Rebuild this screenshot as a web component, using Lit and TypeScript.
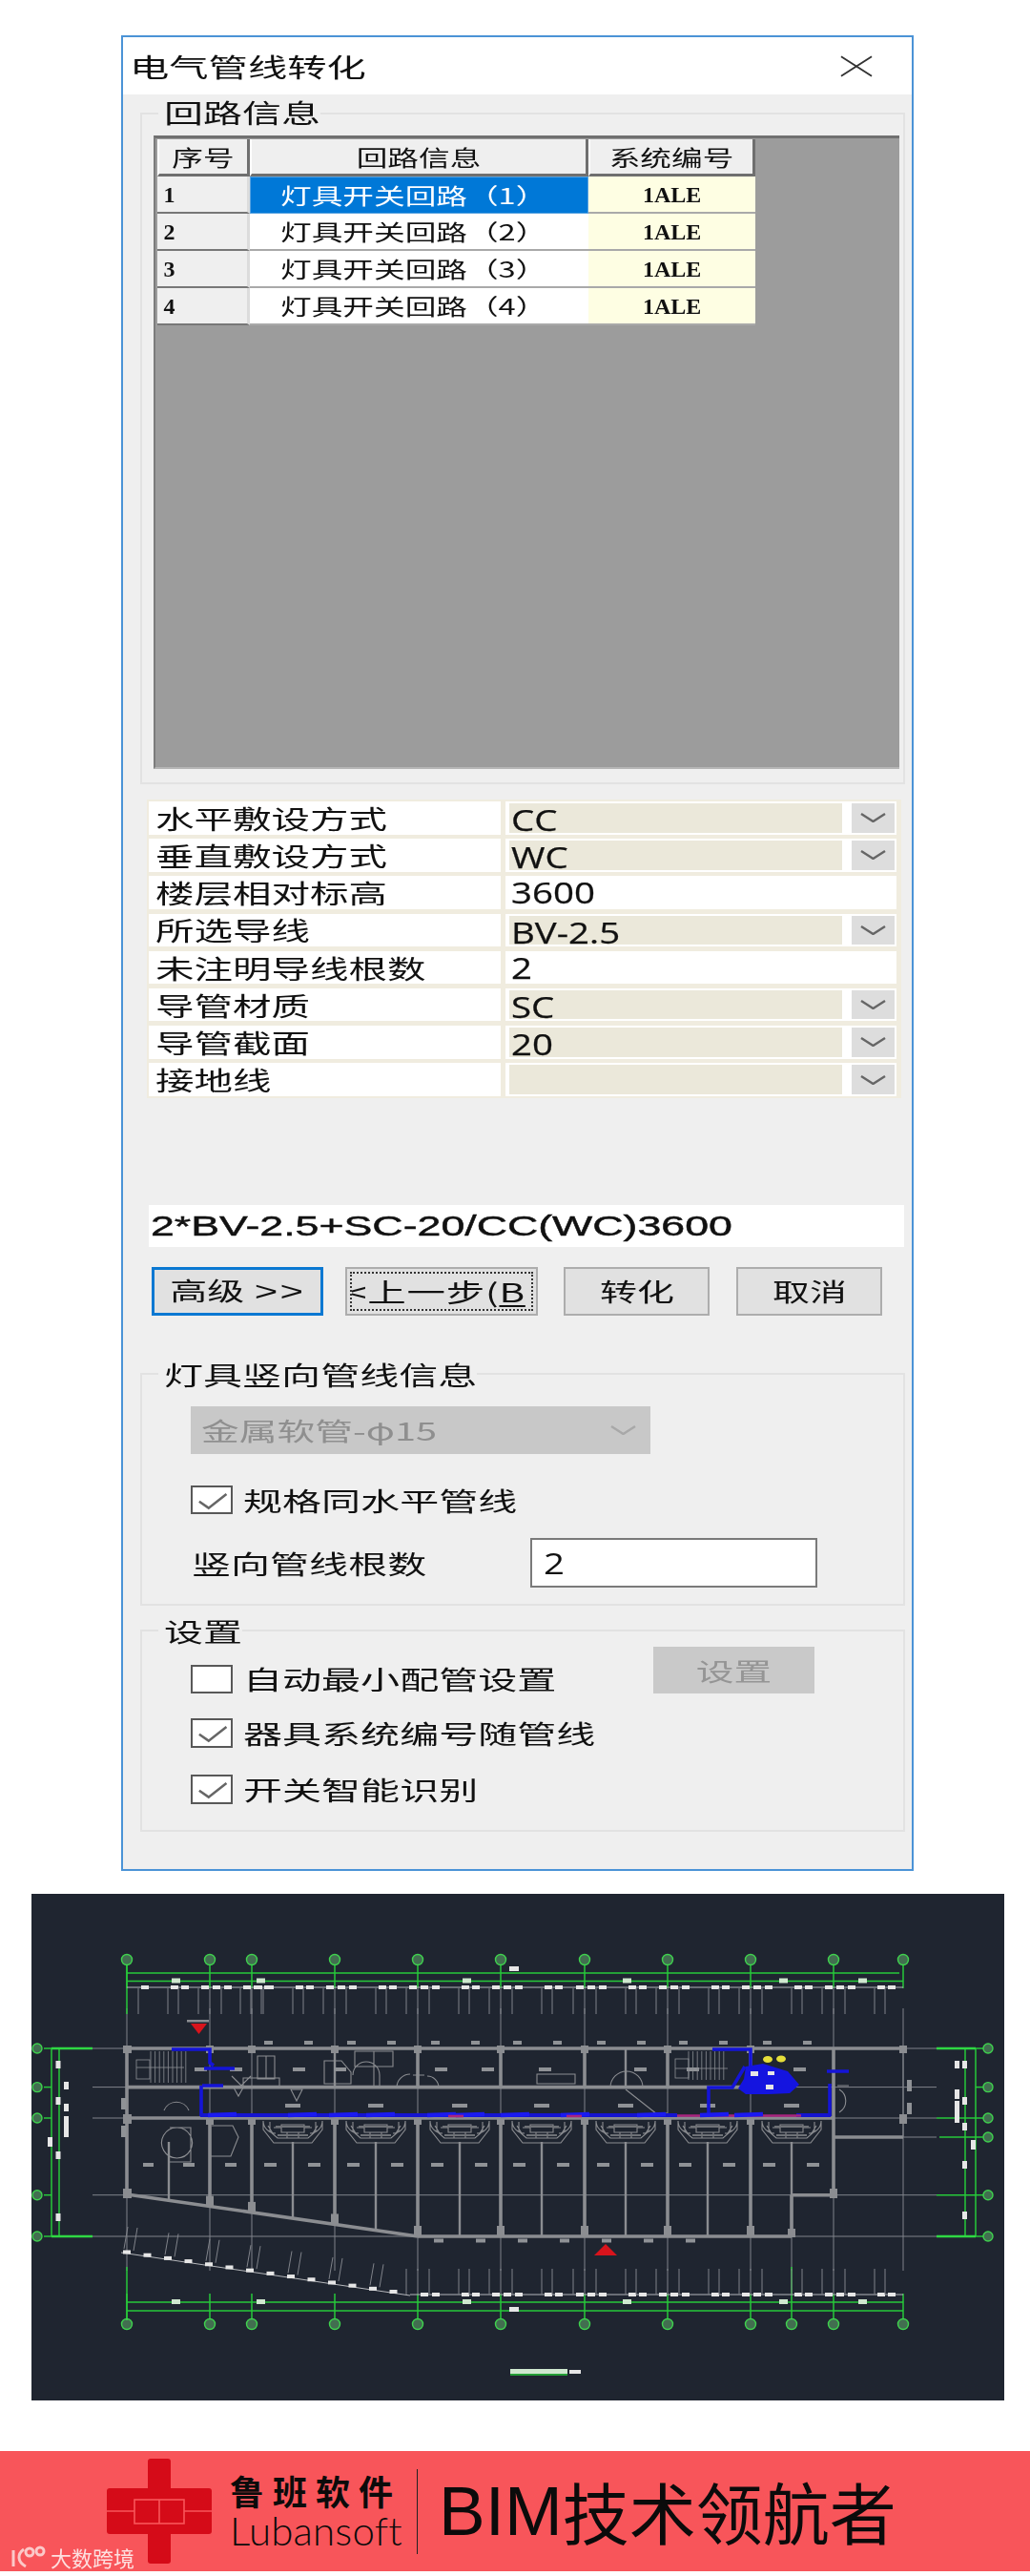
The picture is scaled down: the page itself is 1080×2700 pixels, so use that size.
import { LitElement, html, css, svg } from "lit";
import { customElement } from "lit/decorators.js";

const COLS = [133, 220, 264, 351, 438, 525, 613, 700, 787, 874, 947];
const ROWS = [2147, 2187.6, 2220, 2300.7, 2344];
const CENTERS = [307, 394, 482, 568, 656, 742, 830];

const props = [
  { label: "水平敷设方式", value: "CC", combo: true },
  { label: "垂直敷设方式", value: "WC", combo: true },
  { label: "楼层相对标高", value: "3600", combo: false },
  { label: "所选导线", value: "BV-2.5", combo: true },
  { label: "未注明导线根数", value: "2", combo: false },
  { label: "导管材质", value: "SC", combo: true },
  { label: "导管截面", value: "20", combo: true },
  { label: "接地线", value: "", combo: true },
];

const line = (a: number, b: number, c: number, d: number, cls: string) =>
  svg`<line x1=${a} y1=${b} x2=${c} y2=${d} class=${cls}></line>`;
const box = (x: number, y: number, w: number, h: number, cls: string) =>
  svg`<rect x=${x} y=${y} width=${w} height=${h} class=${cls}></rect>`;
const wallY = (x: number) => (x < 438 ? 2300 + ((x - 133) * 44) / 305 : 2344);

function cad() {
  const out: unknown[] = [];
  // thin axes
  for (const x of COLS) out.push(line(x, 2105, x, 2380, "thin"));
  out.push(line(830, 2344, 830, 2380, "thin"));
  for (const y of ROWS) out.push(line(97, y, 982, y, "thin"));
  out.push(line(874, 2240, 982, 2240, "thin"));
  // green dims
  out.push(line(133, 2068, 943, 2068, "green"), line(133, 2076.5, 947, 2076.5, "green"));
  out.push(line(133, 2413, 947, 2413, "green"), line(133, 2422, 947, 2422, "green"));
  out.push(line(133, 2059, 133, 2111, "green"), line(133, 2376, 133, 2432, "green"));
  for (const x of COLS) {
    out.push(line(x, 2060, x, 2084, "green"), line(x, 2404, x, 2430, "green"));
    out.push(svg`<circle cx=${x} cy=2054 r=5.5 class="ring"></circle>`);
    out.push(svg`<circle cx=${x} cy=2436 r=5.5 class="ring"></circle>`);
  }
  out.push(svg`<circle cx=830 cy=2436 r=5.5 class="ring"></circle>`, line(830, 2376, 830, 2430, "green"));
  out.push(line(54, 2147, 54, 2344, "green"), line(62, 2147, 62, 2344, "green"));
  out.push(line(1012, 2147, 1012, 2344, "green"), line(1023, 2147, 1023, 2344, "green"));
  for (const y of [2147, 2344, 2220, 2187.6, 2300.7]) {
    out.push(line(46, y, 54, y, "green"));
    out.push(svg`<circle cx=39 cy=${y} r=5 class="ring"></circle>`);
    out.push(line(1023, y, 1031, y, "green"));
    out.push(svg`<circle cx=1036 cy=${y} r=5 class="ring"></circle>`);
  }
  out.push(svg`<circle cx=1036 cy=2240 r=5 class="ring"></circle>`, line(985, 2240, 1031, 2240, "green"));
  out.push(line(54, 2147, 97, 2147, "greenb"), line(54, 2344, 97, 2344, "greenb"));
  out.push(line(982, 2147, 1023, 2147, "greenb"), line(982, 2344, 1023, 2344, "greenb"));
  out.push(line(982, 2220, 1023, 2220, "green"), line(982, 2300.7, 1023, 2300.7, "green"));
  // white dims
  out.push(line(133, 2083, 947, 2083, "thinw"), line(430, 2405, 947, 2405, "thinw"), line(127, 2361, 430, 2406, "thinw"));
  for (const x of COLS.slice(0, 10)) {
    for (const d of [-12, 0, 12, 43, 54]) {
      const tx = x + d;
      if (tx > 133) {
        out.push(line(tx, 2084, tx, 2111, "thin"));
        if (x >= 438 || tx > 430) out.push(line(tx, 2378, tx, 2405, "thin"));
      }
      if (tx > 140 && tx < 940) {
        out.push(box(tx + 3, 2081, 8, 4, "wh"));
        if (tx > 436) out.push(box(tx + 3, 2403, 8, 4, "wh"));
      }
    }
  }
  for (let i = 0; i < 14; i++) {
    const x = 129 + i * 21.5;
    const y = 2361 + i * 21.5 * 0.1485;
    out.push(box(x, y - 2.5, 8, 4, "wh"));
    if (i % 2 === 0) out.push(line(x + 1, y - 4, x + 5, y - 27, "thin"), line(x + 11, y - 2, x + 15, y - 26, "thin"));
  }
  for (const x of [133 + 47, 264 + 5, 438 + 47, 613 + 40, 787 + 30, 900]) {
    out.push(box(x, 2073.5, 9, 5, "gl"), box(x, 2410, 9, 5, "gl"));
  }
  out.push(box(534, 2061, 10, 5, "wh"), box(534, 2418, 10, 5, "wh"));
  // walls
  out.push(line(133, 2147, 947, 2147, "wall"), line(133, 2187.6, 785, 2187.6, "wall"));
  out.push(line(133, 2220, 874, 2220, "wall"), line(133, 2147, 133, 2300, "wall"));
  out.push(line(133, 2300, 438, 2344, "wall"), line(438, 2344, 830, 2344, "wall"));
  out.push(line(830, 2344, 830, 2300.7, "wall"), line(830, 2300.7, 874, 2300.7, "wall"));
  out.push(line(874, 2147, 874, 2300.7, "wall"), line(874, 2240, 947, 2240, "wall"), line(947, 2147, 947, 2240, "thin"));
  for (const x of COLS.slice(1, 9)) {
    out.push(line(x, 2220, x, wallY(x), "wall"));
    out.push(box(x - 4, wallY(x) - 11, 8, 11, "col"));
    out.push(box(x - 4, 2216, 8, 11, "col"), box(x - 4, 2144, 8, 8, "col"));
  }
  out.push(box(129, 2294, 9, 10, "col"), box(129, 2144, 9, 8, "col"), box(129, 2216, 9, 10, "col"));
  out.push(box(870, 2294, 8, 10, "col"), box(826, 2336, 8, 9, "col"), box(943, 2216, 8, 10, "col"), box(943, 2144, 8, 8, "col"));
  for (const x of [177, ...CENTERS]) out.push(line(x, 2245, x, wallY(x), "wall2"));
  for (const x of [351, 438, 525, 700, 787, 613, 656]) {
    out.push(line(x, 2147, x, 2187.6, x === 351 || x === 656 ? "wall2" : "wall"));
  }
  // bath rooms
  for (const c of CENTERS) {
    out.push(svg`<path class="fix" d="M${c - 31} 2223v9l11 14h40l11-14v-9M${c - 24} 2224v10l8 7h32l8-7v-10M${c - 12} 2227h24v8h-24zM${c - 31} 2223a13 13 0 0 0 13 13M${c + 31} 2223a13 13 0 0 1-13 13M${c - 20} 2230h8M${c + 12} 2230h8M${c - 6} 2241v-6M${c + 6} 2241v-6M${c - 26} 2228l5 8M${c + 26} 2228l-5 8"></path>`);
    out.push(svg`<path class="fix2" d="M${c - 18} 2229h36M${c - 16} 2238h32"></path>`);
    out.push(box(c - 8, 2205, 16, 4, "lb"));
    out.push(box(c - 30, 2267, 13, 4, "lb"), box(c + 16, 2267, 13, 4, "lb"));
    out.push(box(c - 30, 2139, 9, 4, "lb"), box(c + 12, 2139, 9, 4, "lb"));
  }
  out.push(box(150, 2267, 11, 4, "lb"), box(192, 2267, 12, 4, "lb"), box(236, 2267, 12, 4, "lb"));
  for (const x of [204, 241, 307, 350, 456, 505, 565, 665, 720, 832]) out.push(box(x, 2167, 13, 4, "lb"));
  for (const [x, y] of [[127, 2199], [127, 2228], [951, 2180], [951, 2204]]) out.push(box(x, y, 5, 12, "lb"));
  for (let i = 0; i < 7; i++) out.push(box(455 + i * 44, 2346.5, 10, 4, "lb"));
  // fixtures
  out.push(svg`<path class="fix" d="M270 2155h18v24h-18zM279 2155v24M255 2178h38v10h-38zM172 2212a14 14 0 0 1 26 0M185 2230a16 16 0 1 0 1 0M178 2230h22v36h-22M222 2228h22l6 12-8 20h-22M370 2175a14 14 0 0 1 28 0v12M340 2160h18l10 12v12h-28zM372 2150h40v16h-40zM392 2150v36M445 2175h-12M460 2188a12 12 0 0 0-12 -12M416 2188a14 14 0 0 1 14-14M563 2184h40v-10h-40zM640 2188a17 17 0 0 1 34 0M656 2190l38 30M685 2215h15M878 2186h12M880 2190a14 14 0 0 1 0 24M305 2190l6 12 6-12zM245 2188l5 9 5-9zM243 2176l10 10 10-10"></path>`);
  // stairs
  for (let i = 0; i < 9; i++) out.push(line(158 + i * 4.6, 2150, 158 + i * 4.6, 2183, "thin2"));
  for (let i = 0; i < 9; i++) out.push(line(722 + i * 4.6, 2150, 722 + i * 4.6, 2180, "thin2"));
  out.push(box(143, 2159, 14, 20, "none"), box(708, 2158, 14, 20, "none"));
  out.push(line(143, 2167, 193, 2167, "thin2"), line(708, 2168, 763, 2168, "thin2"));
  // side labels
  for (const [x, y, h] of [[67, 2182, 8], [67, 2205, 8], [67, 2218, 8], [67, 2226, 8], [67, 2232, 8], [58.5, 2160, 8], [58.5, 2198, 8], [58.5, 2255, 8], [58.5, 2320, 8], [50, 2240, 10], [1001, 2160, 8], [1009, 2160, 8], [1001, 2190, 10], [1001, 2202, 14], [1009, 2198, 8], [1001, 2215, 10], [1009, 2225, 8], [1009, 2265, 8], [1009, 2318, 8], [1018, 2243, 10]] as number[][]) {
    out.push(box(x, y, 5, h, "wh"));
  }
  // pipes
  out.push(svg`<path class="pipe" d="M180 2148H220V2162L224 2165M214 2168H246M212 2186H234M211 2186V2218"></path>`);
  out.push(svg`<path class="pipe" d="M747 2148H787V2166M781 2166L768 2188H743V2218M867 2171H890M870 2184V2218"></path>`);
  out.push(line(210, 2217, 710, 2217, "main"), line(835, 2217, 871, 2217, "main"));
  out.push(line(710, 2217.5, 840, 2217.5, "mag"), line(640, 2217, 700, 2217, "main"));
  for (const x of [218, 302, 345, 384, 448, 478, 525, 588, 668, 734, 770]) out.push(line(x, 2217, x + 30, 2216, "main2"));
  out.push(line(470, 2218, 486, 2218, "mag"), line(594, 2218, 610, 2218, "mag"));
  out.push(svg`<path class="blob" d="M782 2166l18-3 26 8 12 14-10 9-22 1-24 0-8-6 6-10z"></path>`);
  out.push(box(787, 2171, 8, 5, "wh"), box(805, 2171, 7, 4, "wh"), box(803, 2185, 8, 5, "wh"));
  out.push(svg`<ellipse cx=805 cy=2158.5 rx=5 ry=3.5 class="yel"></ellipse><ellipse cx=819 cy=2158 rx=5 ry=3.5 class="yel"></ellipse>`);
  // markers and title
  out.push(box(196, 2117, 23, 2.5, "col"));
  out.push(svg`<polygon class="red" points="200,2121 217,2121 208.5,2132"></polygon>`);
  out.push(svg`<polygon class="red" points="635,2352 623,2364 647,2364"></polygon>`);
  out.push(box(535, 2483, 60, 5, "gl"), line(535, 2489, 595, 2489, "green"), box(597, 2484, 12, 4, "wh"));
  return out;
}

@customElement("app-root")
export class AppRoot extends LitElement {
  static styles = css`
    :host { display: block; width: 1080px; height: 2700px; background: #fff; overflow: hidden; font-family: "Noto Sans CJK SC", "Liberation Sans", sans-serif; color: #111; }
    .page { display: flex; flex-direction: column; padding-top: 37px; }
    .sx { display: inline-block; white-space: nowrap; transform-origin: left center; transform: scaleX(1.5); }
    .mid { transform-origin: center; }
    .dialog { box-sizing: border-box; width: 831px; height: 1924px; margin-left: 127px; border: 2px solid #4b93d6; background: #efefef; filter: blur(0.45px); }
    .title { height: 60px; background: #fff; display: flex; align-items: center; justify-content: space-between; padding-left: 7px; padding-right: 41px; font-size: 27px; line-height: 1; }
    .title .sx { transform: scaleX(1.53); }
    .close { width: 34px; height: 23px; }
    .close path { stroke: #333; stroke-width: 2; fill: none; }
    .body { padding: 0 0 0 18px; display: flex; flex-direction: column; align-items: flex-start; }
    .group { position: relative; box-sizing: border-box; width: 802.3px; border: 2px solid #e2e2e2; }
    .legend { position: absolute; left: 17px; top: -14px; height: 27px; display: flex; align-items: center; line-height: 1; padding-left: 6px; background: #efefef; font-size: 27px; }
    .legend .sx { transform: scaleX(1.52); }
    .g1 { margin-top: 19px; height: 704px; padding: 22px 4.5px 14px 11.6px; }
    .g1 .legend { top: -16px; }
    .gridbox { box-sizing: border-box; height: 100%; background: #9c9c9c; border-top: 3px solid #707070; border-left: 2px solid #7c7c7c; border-bottom: 2px solid #b5b5b5; padding: 1px 0 0 2px; }
    .table { display: grid; grid-template-columns: 97.6px 355px 175px; grid-template-rows: repeat(5, 39px); width: 627.6px; font-size: 23px; line-height: 1; }
    .cell { display: flex; align-items: center; box-sizing: border-box; border-bottom: 2px solid #a9a9a9; white-space: nowrap; }
    .cell .sx { transform: scaleX(1.42); }
    .head { background: #efefef; justify-content: center; border-left: 2px solid #fff; border-right: 3px solid #6f6f6f; border-bottom: 3px solid #6f6f6f; }
    .num { background: #efefef; padding-left: 7px; border-right: 3px solid #dcdcdc; border-bottom: 2px solid #777; font: bold 24px/1 "Liberation Serif", serif; }
    .name { background: #fff; padding-left: 32px; }
    .sel { background: #0078d7; color: #fff; border: 1px solid #5aa3e0; padding-left: 31px; }
    .sys { background: #fefee3; justify-content: center; font: bold 24px/1 "Liberation Serif", serif; }
    .props { margin: 16px 0 0 6.5px; box-sizing: border-box; width: 791px; padding: 2px 4px 2px 2.3px; background: #f0ecdf; display: grid; grid-template-columns: 369px 410.2px; column-gap: 5.5px; grid-auto-rows: 34.5px; row-gap: 4.7px; }
    .plabel { background: #fff; padding-left: 7px; font-size: 27px; line-height: 1; display: flex; align-items: center; }
    .pvalue { background: #fff; display: flex; box-sizing: border-box; padding: 2px 2.6px 2px 3.8px; font: 31px/1 "Open Sans", sans-serif; -webkit-text-stroke: 0.25px #111; }
    .pvalue .sx { transform: scaleX(1.24); }
    .text { padding-left: 2.4px; display: flex; align-items: center; }
    .combo { width: 349.4px; background: #ebe8da; padding: 2px 0 0 2.4px; box-sizing: border-box; height: 30.5px; }
    .drop { margin-left: 9.4px; width: 45px; background: #dddddd; display: flex; align-items: center; justify-content: center; }
    .chev { width: 27px; height: 10px; }
    .chev path { stroke: #666; stroke-width: 2.4; fill: none; }
    .formula { margin: 112px 0 0 8.8px; width: 792.7px; height: 44px; background: #fff; display: flex; align-items: center; padding-left: 2px; box-sizing: border-box; font: 30px/1 "Liberation Sans", sans-serif; color: #111; -webkit-text-stroke: 0.45px #111; }
    .formula .sx { transform: scaleX(1.49); }
    .buttons { margin: 21px 0 0 12.1px; display: flex; height: 51px; line-height: 1; }
    .btn { box-sizing: border-box; height: 51px; background: #e1e1e1; border: 2px solid #adadad; display: flex; align-items: center; justify-content: center; font-size: 26px; overflow: hidden; }
    .b1 { width: 179.9px; border: 3px solid #0a78d2; }
    .gt { font-family: "Liberation Sans", sans-serif; font-size: 28px; letter-spacing: 1.5px; margin-left: 7px; }
    .b2 { width: 202.1px; margin-left: 22.8px; padding: 3px; }
    .b3 { width: 153.5px; margin-left: 27.1px; }
    .b4 { width: 153px; margin-left: 28px; }
    .focus { box-sizing: border-box; width: 100%; height: 100%; border: 2px dotted #333; overflow: hidden; display: flex; align-items: center; padding-left: 1px; font-size: 27px; letter-spacing: .5px; }
    .focus .sx { margin-left: -8px; }
    .focus u { text-underline-offset: 3px; }
    .g2 { margin-top: 60.6px; height: 243.4px; padding: 32.4px 0 0 51.2px; }
    .dcombo { box-sizing: border-box; width: 481.8px; height: 50.7px; background: #c8c8c8; color: #8f8f8f; font-size: 26.5px; line-height: 1; display: flex; align-items: center; justify-content: space-between; padding: 0 15px 0 11px; }
    .dcombo .chev path { stroke: #a8a8a8; }
    .chk { display: flex; align-items: center; height: 30.6px; font-size: 27px; line-height: 1; }
    .chk .sx, .numrow .sx { transform: scaleX(1.52); }
    .box { box-sizing: border-box; width: 43.4px; height: 30.6px; border: 2px solid #585858; background: #fff; margin-right: 11px; flex: none; }
    .box svg { display: block; width: 100%; height: 100%; }
    .box path { stroke: #666; stroke-width: 2.6; fill: none; }
    .c1 { margin-top: 32.3px; }
    .numrow { margin-top: 24.6px; display: flex; align-items: center; font-size: 27px; line-height: 1; padding-left: 1px; }
    .numrow .lab { width: 355.1px; }
    .input { box-sizing: border-box; width: 300.7px; height: 52.2px; background: #fff; border: 2px solid #7a7a7a; display: flex; align-items: center; padding-left: 11.7px; font: 31px/1 "Open Sans", sans-serif; }
    .input .sx { transform: scaleX(1.24); }
    .g3 { margin-top: 24.8px; height: 212px; padding: 16.9px 0 0 51.2px; }
    .setrow { display: flex; align-items: flex-end; height: 48.8px; width: 654.2px; justify-content: space-between; }
    .disbtn { box-sizing: border-box; width: 169.6px; height: 48.8px; background: #c9c9c9; color: #959595; display: flex; align-items: center; justify-content: center; font-size: 26.5px; line-height: 1; }
    .c3 { margin-top: 25.9px; }
    .c4 { margin-top: 28.6px; }
    .cad { display: block; margin: 24px 0 0 33px; width: 1020px; height: 531px; background: #1f2530; filter: blur(0.55px); }
    .cad line, .cad path { fill: none; }
    .thin { stroke: #80838a; stroke-width: 1; }
    .thin2 { stroke: #8d9096; stroke-width: .8; }
    .thinw { stroke: #b5b7bb; stroke-width: 1; }
    .green { stroke: #27c93a; stroke-width: 1.5; }
    .greenb { stroke: #2fd843; stroke-width: 2.4; }
    .cad .ring { stroke: #3fd24e; stroke-width: 1.4; fill: rgba(120, 220, 130, 0.4); }
    .wh { fill: #e6e6e6; }
    .gl { fill: #cfe8cf; }
    .lb { fill: #8f9296; }
    .cad .none { stroke: #8d9096; stroke-width: .8; fill: none; }
    .wall { stroke: #8b8d91; stroke-width: 3.6; }
    .wall2 { stroke: #8b8d91; stroke-width: 2.4; }
    .col { fill: #8b8d91; }
    .fix { stroke: #8b8d91; stroke-width: 1.1; }
    .fix2 { stroke: #6f7277; stroke-width: 2; }
    .cad .pipe { stroke: #1414d8; stroke-width: 3.6; }
    .main { stroke: #1414cf; stroke-width: 3.8; }
    .main2 { stroke: #1a1af0; stroke-width: 4.6; }
    .mag { stroke: #a8247e; stroke-width: 2.6; }
    .cad .blob { fill: #1414e0; }
    .yel { fill: #e6df3a; }
    .red { fill: #d8141c; }
    .footer { position: relative; margin-top: 53px; height: 126px; background: #f8555a; display: flex; align-items: center; color: #0b0b0b; filter: blur(0.4px); }
    .logo { width: 110px; height: 110px; margin-left: 112px; flex: none; }
    .brand { margin-left: 19px; width: 196px; display: flex; flex-direction: column; }
    .cn { font-size: 36px; font-weight: 700; letter-spacing: 9px; line-height: 38px; white-space: nowrap; }
    .en { font: 300 42px/42px Lato, "Liberation Sans", sans-serif; margin-top: 2px; letter-spacing: .2px; }
    .divider { width: 1px; height: 89px; background: #222; }
    .slogan { margin-left: 22px; display: flex; align-items: center; white-space: nowrap; font-size: 70px; line-height: 80px; }
    .slogan b { font: 400 73px/80px "Liberation Sans", sans-serif; }
    .mark { position: absolute; left: 11px; top: 98px; display: flex; align-items: center; color: #fde0e0; font-size: 22px; line-height: 26px; }
    .mark svg { width: 40px; height: 26px; margin-right: 2px; }
    .mark path, .mark circle { stroke: #fbc9c9; stroke-width: 3; fill: none; }
  `;

  private chev() {
    return html`<svg class="chev" viewBox="0 0 27 10"><path d="M1 1l12.5 8L26 1"></path></svg>`;
  }

  private t(s: string) {
    return html`<span class="sx">${s}</span>`;
  }

  private check(text: string, on: boolean, cls: string) {
    return html`<div class="chk ${cls}">
      <div class="box">${on ? html`<svg viewBox="0 0 40 27"><path d="M7 15l10 7L36 7"></path></svg>` : ""}</div>
      ${this.t(text)}
    </div>`;
  }

  render() {
    const rows = [1, 2, 3, 4];
    return html`<div class="page">
      <div class="dialog">
        <div class="title">
          ${this.t("电气管线转化")}
          <svg class="close" viewBox="0 0 35 23"><path d="M1 1l33 21M34 1L1 22"></path></svg>
        </div>
        <div class="body">
          <div class="group g1">
            <div class="legend" style="width:${4 * 41}px">${this.t("回路信息")}</div>
            <div class="gridbox">
              <div class="table">
                <div class="cell head"><span class="sx mid">序号</span></div>
                <div class="cell head"><span class="sx mid">回路信息</span></div>
                <div class="cell head"><span class="sx mid">系统编号</span></div>
                ${rows.map(
                  (n) => html`
                    <div class="cell num">${n}</div>
                    <div class="cell name ${n === 1 ? "sel" : ""}">${this.t(`灯具开关回路（${n}）`)}</div>
                    <div class="cell sys">1ALE</div>
                  `
                )}
              </div>
            </div>
          </div>
          <div class="props">
            ${props.map(
              (p) => html`
                <div class="plabel">${this.t(p.label)}</div>
                <div class="pvalue">
                  ${p.combo
                    ? html`<div class="combo">${this.t(p.value)}</div><div class="drop">${this.chev()}</div>`
                    : html`<div class="text">${this.t(p.value)}</div>`}
                </div>
              `
            )}
          </div>
          <div class="formula">${this.t("2*BV-2.5+SC-20/CC(WC)3600")}</div>
          <div class="buttons">
            <div class="btn b1"><span class="sx mid">高级<span class="gt">&gt;&gt;</span></span></div>
            <div class="btn b2"><div class="focus"><span class="sx">&lt;上一步(<u>B</u></span></div></div>
            <div class="btn b3"><span class="sx mid">转化</span></div>
            <div class="btn b4"><span class="sx mid">取消</span></div>
          </div>
          <div class="group g2">
            <div class="legend" style="width:${8 * 41}px">${this.t("灯具竖向管线信息")}</div>
            <div class="dcombo">${this.t("金属软管-φ15")}${this.chev()}</div>
            ${this.check("规格同水平管线", true, "c1")}
            <div class="numrow">
              <div class="lab">${this.t("竖向管线根数")}</div>
              <div class="input">${this.t("2")}</div>
            </div>
          </div>
          <div class="group g3">
            <div class="legend" style="width:${2 * 41}px">${this.t("设置")}</div>
            <div class="setrow">
              ${this.check("自动最小配管设置", false, "")}
              <div class="disbtn"><span class="sx mid">设置</span></div>
            </div>
            ${this.check("器具系统编号随管线", true, "c3")}
            ${this.check("开关智能识别", true, "c4")}
          </div>
        </div>
      </div>

      <svg class="cad" viewBox="33 1985 1020 531">${cad()}</svg>

      <div class="footer">
        <svg class="logo" viewBox="0 0 110 110">
          <rect x="43" y="0" width="24" height="110" rx="3" fill="#d50b18"></rect>
          <rect x="0" y="31" width="110" height="48" rx="3" fill="#d50b18"></rect>
          <path d="M0 55h29M81 55h29" stroke="#f8555a" stroke-width="1.6"></path>
          <rect x="29" y="43" width="52" height="25" fill="#d50b18" stroke="#f8555a" stroke-width="1.6"></rect>
          <path d="M55 43v25" stroke="#f8555a" stroke-width="1.6"></path>
        </svg>
        <div class="brand">
          <div class="cn">鲁班软件</div>
          <div class="en">Lubansoft</div>
        </div>
        <div class="divider"></div>
        <div class="slogan"><b>BIM</b>技术领航者</div>
        <div class="mark">
          <svg viewBox="0 0 40 26">
            <path d="M3 6v17M14 5C7 10 7 18 16 23"></path>
            <circle cx="20" cy="8" r="4"></circle>
            <circle cx="31" cy="7" r="4"></circle>
          </svg>
          大数跨境
        </div>
      </div>
    </div>`;
  }
}
